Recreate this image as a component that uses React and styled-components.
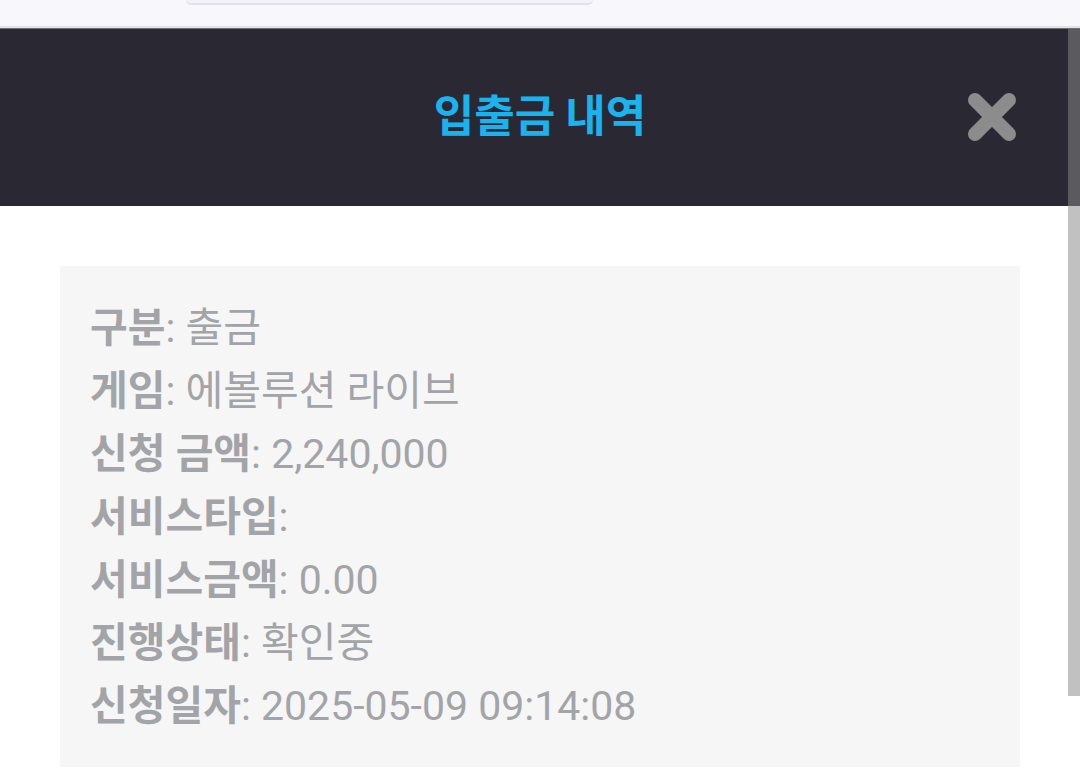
import styled, { createGlobalStyle } from 'styled-components';

const GlobalStyle = createGlobalStyle`
  html, body {
    margin: 0;
    padding: 0;
    background: #ffffff;
    overflow: hidden;
  }
  body {
    font-family: Roboto, "Noto Sans CJK KR", sans-serif;
  }
`;

const rows = [
  { label: '구분', value: '출금' },
  { label: '게임', value: '에볼루션 라이브' },
  { label: '신청 금액', value: '2,240,000' },
  { label: '서비스타입', value: '' },
  { label: '서비스금액', value: '0.00' },
  { label: '진행상태', value: '확인중' },
  { label: '신청일자', value: '2025-05-09 09:14:08' },
];

const App = () => {
  return (
    <Screen>
      <GlobalStyle />
      <TopBar>
        <SearchEdge />
      </TopBar>
      <Header>
        <Title>입출금 내역</Title>
        <CloseButton aria-label="close">
          <svg width="52" height="52" viewBox="0 0 52 52">
            <path
              d="M9 9 L43 43 M43 9 L9 43"
              stroke="#8c8c8c"
              strokeWidth="14"
              strokeLinecap="round"
              fill="none"
            />
          </svg>
        </CloseButton>
      </Header>
      <Body>
        <InfoCard>
          {rows.map((row, key) => (
            <InfoRow key={key}>
              <Label>{row.label}</Label>: {row.value}
            </InfoRow>
          ))}
        </InfoCard>
      </Body>
      <ScrollThumb />
    </Screen>
  );
};

export default App;

const Screen = styled.div`
  position: relative;
  width: 1080px;
  height: 775px;
  overflow: hidden;
  background: #ffffff;
`;

const TopBar = styled.div`
  height: 26px;
  background: #f7f7fc;
  border-bottom: 2px solid #e2e2ea;
`;

const SearchEdge = styled.div`
  margin-left: 186px;
  width: 407px;
  height: 3px;
  border-bottom: 2px solid #e2e2ee;
  border-radius: 0 0 40px 40px;
  background: #f2f2f8;
`;

const Header = styled.div`
  position: relative;
  display: flex;
  align-items: center;
  justify-content: center;
  height: 178px;
  background: #2a2933;
  border-top: 1px solid #6f6f74;
  box-sizing: border-box;
`;

const Title = styled.h1`
  margin: 0;
  padding-bottom: 10px;
  font-family: "Noto Sans CJK KR", Roboto, sans-serif;
  font-size: 44px;
  font-weight: 700;
  color: #19b4ef;
`;

const CloseButton = styled.div`
  position: absolute;
  right: 62px;
  top: 62px;
  width: 52px;
  height: 52px;
  display: flex;
  align-items: center;
  justify-content: center;
`;

const Body = styled.div`
  padding: 60px 60px 0;
`;

const InfoCard = styled.div`
  background: #f6f6f6;
  padding: 31px 30px 29px;
  display: flex;
  flex-direction: column;
`;

const InfoRow = styled.div`
  font-size: 41px;
  line-height: 63px;
  color: #a2a4a8;
  white-space: nowrap;
`;

const Label = styled.span`
  font-weight: 700;
`;

const ScrollThumb = styled.div`
  position: absolute;
  right: 0;
  top: 29px;
  width: 12px;
  height: 667px;
  background: rgba(137, 137, 137, 0.52);
`;
